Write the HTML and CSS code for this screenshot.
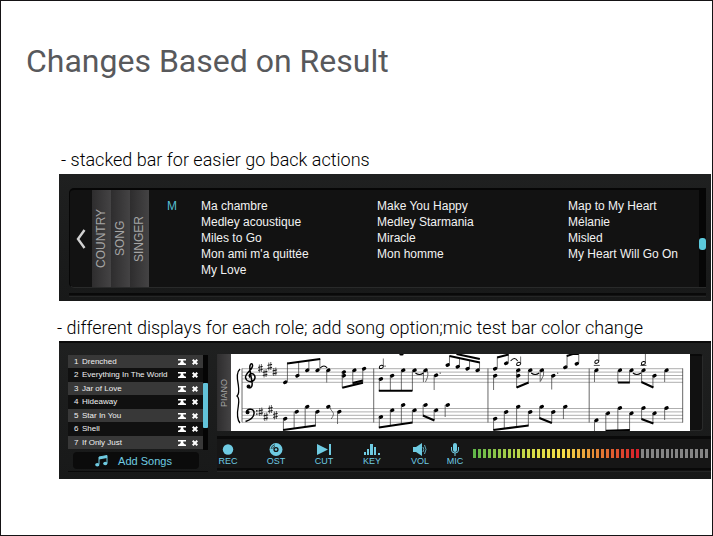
FILE: index.html
```html
<!DOCTYPE html>
<html lang="en">
<head>
<meta charset="utf-8">
<title>Changes Based on Result</title>
<link rel="stylesheet" href="styles.css">
</head>
<body>
<main class="slide">
  <h1>Changes Based on Result</h1>

  <section class="change">
    <h2>- stacked bar for easier go back actions</h2>
    <div class="panel browser">
      <div class="browser-well">
        <button class="back" type="button" aria-label="Back"><svg width="10" height="22" viewBox="0 0 10 22"><path d="M8.500 2L2 11l6.500 9" fill="none" stroke="#d2d2d2" stroke-width="2.400"/></svg></button>
        <nav class="stack">
          <button type="button">COUNTRY</button>
          <button type="button">SONG</button>
          <button type="button">SINGER</button>
        </nav>
        <div class="titles">
          <strong>M</strong>
          <ul><li>Ma chambre</li><li>Medley acoustique</li><li>Miles to Go</li><li>Mon ami m'a quittée</li><li>My Love</li></ul>
          <ul><li>Make You Happy</li><li>Medley Starmania</li><li>Miracle</li><li>Mon homme</li></ul>
          <ul><li>Map to My Heart</li><li>Mélanie</li><li>Misled</li><li>My Heart Will Go On</li></ul>
        </div>
        <div class="scroll"><i></i></div>
      </div>
      <div class="groove"></div>
    </div>
  </section>

  <section class="change second">
    <h2>- different displays for each role; add song option;mic test bar color change</h2>
    <div class="panel player">
      <svg class="defs" width="0" height="0">
        <symbol id="top" viewBox="0 0 8 6"><path d="M0 0h8v1.500H5.300V3L7 4.500h1V6H0V4.500h1L2.700 3V1.500H0z"/></symbol>
        <symbol id="del" viewBox="0 0 6 6"><path d="M.7 .7l4.600 4.600M5.300 .7L.7 5.300" stroke="#fff" stroke-width="2"/></symbol>
      </svg>
      <div class="queue">
        <div class="queue-list">
          <ol>
            <li><b>1</b><span>Drenched</span><button type="button" aria-label="Move to top"><svg width="8" height="6"><use href="#top"/></svg></button><button type="button" aria-label="Remove"><svg width="6" height="6"><use href="#del"/></svg></button></li>
            <li><b>2</b><span>Everything In The World</span><button type="button" aria-label="Move to top"><svg width="8" height="6"><use href="#top"/></svg></button><button type="button" aria-label="Remove"><svg width="6" height="6"><use href="#del"/></svg></button></li>
            <li><b>3</b><span>Jar of Love</span><button type="button" aria-label="Move to top"><svg width="8" height="6"><use href="#top"/></svg></button><button type="button" aria-label="Remove"><svg width="6" height="6"><use href="#del"/></svg></button></li>
            <li><b>4</b><span>Hideaway</span><button type="button" aria-label="Move to top"><svg width="8" height="6"><use href="#top"/></svg></button><button type="button" aria-label="Remove"><svg width="6" height="6"><use href="#del"/></svg></button></li>
            <li><b>5</b><span>Star In You</span><button type="button" aria-label="Move to top"><svg width="8" height="6"><use href="#top"/></svg></button><button type="button" aria-label="Remove"><svg width="6" height="6"><use href="#del"/></svg></button></li>
            <li><b>6</b><span>Shell</span><button type="button" aria-label="Move to top"><svg width="8" height="6"><use href="#top"/></svg></button><button type="button" aria-label="Remove"><svg width="6" height="6"><use href="#del"/></svg></button></li>
            <li><b>7</b><span>If Only Just</span><button type="button" aria-label="Move to top"><svg width="8" height="6"><use href="#top"/></svg></button><button type="button" aria-label="Remove"><svg width="6" height="6"><use href="#del"/></svg></button></li>
          </ol>
          <div class="queue-scroll"><i></i></div>
        </div>
        <button class="add" type="button"><svg width="13" height="12" viewBox="0 0 13 12"><path d="M4 9V2l8-1.500V8" fill="none" stroke="#6fcbe2"/><path d="M4 2l8-1.500V3L4 4.500z" fill="#6fcbe2"/><ellipse cx="2.300" cy="9.800" rx="2.100" ry="1.700" fill="#6fcbe2"/><ellipse cx="10.300" cy="8.500" rx="2.100" ry="1.700" fill="#6fcbe2"/></svg>Add Songs</button>
      </div>

      <div class="stage">
        <div class="score">
          <button class="part" type="button">PIANO</button>
          <svg class="sheet" viewBox="0 0 458 77" preserveAspectRatio="none" role="img" aria-label="Piano score">
            <g fill="none" stroke="#000">
              <path stroke="#777" stroke-width=".6" d="M11 14.700H451M11 18.100H451M11 21.500H451M11 24.900H451M11 28.300H451M11 54.500H451M11 57.900H451M11 61.300H451M11 64.700H451M11 68.300H451"/>
              <path stroke="#444" stroke-width=".8" d="M11 14.500v54M142.400 14.500v54M256.400 14.500v54M357.400 14.500v54M450.700 14.500v54"/>
              <path stroke-width="1.300" d="M9 15C5.500 18 6 25 7.300 31 8 36 8.500 40 6 42c2.500 2 2 6 1.300 10C6 59 5.500 65 9 69"/>
              <!-- treble clef -->
              <path stroke-width="1.500" d="M19 23.500c-1.500-1.700-.5-4 1.500-4 3 0 4.500 4 2.500 6.500-2.500 3-8 1.500-8.500-2.500C14 19 21 16.500 21.500 12c.2-3-1.700-3-2.500-.5-1 3.500 1 10 2 16.500.5 4-.5 6-2.800 6"/>
              <circle cx="17.500" cy="32.500" r="1.500" fill="#000"/>
              <!-- bass clef -->
              <path stroke-width="1.500" d="M15.500 58c.5-4 8-4 7.500 1.500-.3 4-4 6.500-8.500 8"/>
              <circle cx="16.500" cy="58.300" r="1.500" fill="#000"/><path stroke-width="1.600" stroke-linecap="round" d="M25.800 56.800v.1M25.800 60v.1"/>
              <!-- key signatures -->
              <path stroke-width=".6" d="M28.300 10.500v8M30.300 10v8M33 15.500v8M35 15v8M37.700 8.500v8M39.700 8v8M42.700 14v8M44.700 13.500v8M28.700 54v8M30.700 53.500v8M33.700 59v8M35.700 58.500v8M38.300 51.500v8M40.300 51v8M43.300 57.500v8M45.300 57v8"/>
              <path stroke-width=".9" d="M27 13.400l4.600-1M27 16.400l4.600-1M31.700 18.400l4.600-1M31.700 21.400l4.600-1M36.400 11.400l4.600-1M36.400 14.400l4.600-1M41.400 16.900l4.600-1M41.400 19.900l4.600-1M27.400 56.900l4.600-1M27.400 59.900l4.600-1M32.400 61.900l4.600-1M32.400 64.900l4.600-1M37 54.400l4.600-1M37 57.400l4.600-1M42 60.400l4.600-1M42 63.400l4.600-1"/>
              <!-- note heads -->
              <path stroke-width="3.200" stroke-linecap="round" d="M53.500 28.600l1.200-.6M65.700 22l1.200-.6M75.500 16.600l1.200-.6M85.700 16.600l1.200-.6M96.500 16.600l1.200-.6M112 18.400l1.200-.6M112 22l1.200-.6M122.500 16.600l1.200-.6M132.200 15l1.200-.6M53.500 65l1.200-.6M65 58l1.200-.6M75.500 53l1.200-.6M85.700 58l1.200-.6M96.500 53l1.200-.6M107.500 58l1.200-.6"/>
              <path stroke-width="3.200" stroke-linecap="round" d="M149 25.300l1.200-.6M160.200 22l1.200-.6M171.200 16.600l1.200-.6M182.500 16.600l1.200-.6M193.500 16.600l1.200-.6M204 21.600l1.200-.6M215.700 11.300l1.200-.6M225.700 13l1.200-.6M235.500 15l1.200-.6M245.500 16.600l1.200-.6M169.500 0h1.200M149 63.300l1.200-.6M160.200 56.600l1.200-.6M171.200 51.300l1.200-.6M182.500 56.600l1.200-.6M193.500 51.300l1.200-.6M204 56.600l1.200-.6M215.700 51.300l1.200-.6"/>
              <path stroke-width="3.200" stroke-linecap="round" d="M263 15l1.200-.6M274 9.600l1.200-.6M263 22l1.200-.6M286 16.600l1.200-.6M286 22l1.200-.6M298 16.600l1.200-.6M309.500 16.600l1.200-.6M321 22l1.200-.6M333 13.600l1.200-.6M344.500 10l1.200-.6M263 65l1.200-.6M274 58.300l1.200-.6M286 53l1.200-.6M298 58.300l1.200-.6M309.500 53l1.200-.6M321 58.300l1.200-.6M333 53l1.200-.6"/>
              <path stroke-width="3.200" stroke-linecap="round" d="M364 16.600l1.200-.6M387.500 16.600l1.200-.6M399 16.600l1.200-.6M411 16.600l1.200-.6M422 22l1.200-.6M434 16.600l1.200-.6M364 66.600l1.200-.6M375.500 59.600l1.200-.6M387.500 54.300l1.200-.6M399 59.600l1.200-.6M411 54.300l1.200-.6M422 59.600l1.200-.6M434 54.300l1.200-.6"/>
              <path d="M148 13.500c0-2.500 4-3 4-1s-4 3-4 1M285 10.500c0-2.500 4-3 4-1s-4 3-4 1M363 8.300c0-2.500 4-3 4-1s-4 3-4 1M409.500 9.800c0-2.500 4-3 4-1s-4 3-4 1"/>
              <path stroke-width=".7" d="M362 11.400h6M408.500 11.400h6"/>
              <!-- stems -->
              <path stroke="#333" stroke-width=".7" d="M56.300 28V8.700M67.500 21V7M77.700 16V6M88.700 16V4.500M95.500 17v11.500M111 18v15.500M121.500 17v13M131.500 15v13M52.300 65v11.700M63 58v17M74 53v20M84.300 58v13.700M98.500 53q1 3 3 5t-1.500 7M106.300 58v12M152 12V4.500M148 25v12M159 22v15M170 17v20M181 17v20M195.800 17q2 4-1.800 11M192 17v11M202.700 22v14M218 11V1.500M228 12V4M238 14V6M248 16V8M148 63v10.500M159 56v16M170 51v19M181 56v12.500M191.700 51v10.500M202.700 56v10M213.700 51v12"/>
              <path stroke="#333" stroke-width=".7" d="M265.700 14V3.500M276.700 9V0M289 10V2.500M262 22v14M285 17v17M296.700 17v11M312 17q1 4-3 10M308.500 17v11M320 22v13.500M335.300 13V1.500M347 9V0M262 65v11M272.700 58v16.500M285 53v20M296.700 58v13.500M308 53v11M320 58v10.500M331.700 53v12M367 7V0M413.500 9V0M362.700 17v11M386 17v11M397.700 17v11M409.700 17v11M421 22v11.500M432.700 17v11M362.700 66v11M374 59v18M386 54v23M397.700 59v17M409.700 54v11M421 59v10M432.700 54v12"/>
              <!-- beams -->
              <path stroke-width="2" d="M56 9.500l33-4.500M111 33.700l20.700-5M121.500 29l10-2.500M52 76l32.500-4.500M147.500 36.700H181M218 2l30.300 6.500M225 0l23.300 5M147.500 73.500l33.700-5M191.500 61.500l11.500 5M265.500 3.500l11.500-3M285 33.500l12-5M335 2l6-2h6M261.700 76l35.300-4.500M307.700 64l12.500 5M386 28.500h12M409.500 28l12 5.500M374 76.700l24-.7M409.500 65l12 4.500"/>
              <!-- ties and dots -->
              <path d="M89 14q4-4 7 0M184 19q4 3 8 0M279 7q4-5 7 0M299.500 19q4 3 8 0M401 19q4 3 8 0"/>
              <path stroke-width="1.200" stroke-linecap="round" d="M153.700 12v.1M208.700 19v.1M326 19v.1"/>
            </g>
          </svg>
          <div class="score-edge"></div>
        </div>
        <div class="tools">
          <button type="button"><svg width="16" height="13" viewBox="0 0 16 13"><circle cx="8" cy="6.500" r="5.200"/></svg>REC</button>
          <button type="button"><svg width="16" height="13" viewBox="0 0 16 13"><circle cx="8" cy="6.500" r="6.500"/><circle cx="8" cy="6.500" r="2.600" fill="#151515"/><circle cx="8" cy="6.500" r="1.200"/><path d="M3 6Q3.500 2.500 7 1.700M4.700 6Q5 4 7 3.300" fill="none" stroke="#151515" stroke-width=".7"/></svg>OST</button>
          <button type="button"><svg width="16" height="13" viewBox="0 0 16 13"><path d="M1 1l11 5.500L1 12zM13 1h2v11h-2z"/></svg>CUT</button>
          <button type="button"><svg width="16" height="13" viewBox="0 0 16 13"><path d="M0 9h2v3H0zM3 6h2v6H3zM6 1h3v11H6zM10 4h2v8h-2zM14 10h2v2h-2z"/></svg>KEY</button>
          <button type="button"><svg width="16" height="13" viewBox="0 0 16 13"><path d="M1 4h3l6-4v13L4 9H1z"/><path d="M11 4q1.500 2.500 0 5M12.500 2q3 4.500 0 9" fill="none" stroke="#6fcbe2" stroke-width=".8"/></svg>VOL</button>
          <button class="mic" type="button"><svg width="16" height="13" viewBox="0 0 16 13"><rect x="6" width="4" height="9" rx="2"/><path d="M4.500 4v3q0 3 3.500 3t3.500-3V4M8 10v3" fill="none" stroke="#6fcbe2"/></svg>MIC</button>
          <div class="level" id="level" role="meter" aria-label="Microphone level" aria-valuemin="0" aria-valuemax="48" aria-valuenow="34"></div>
        </div>
        <div class="groove"></div>
      </div>
    </div>
  </section>
</main>
<script src="level.js"></script>
</body>
</html>
```
FILE: level.js
```js
// Segment colours run green, yellow, orange, red; unlit segments are grey.
var level = document.getElementById('level');
var stops = [[98, 183, 73], [216, 222, 72], [246, 222, 72], [228, 130, 52], [216, 32, 42]];
var at = [0, 12, 18, 25, 33];
for (var i = 0; i < 48; i++) {
  var bar = document.createElement('i');
  if (i < 34) {
    var k = 0;
    while (k < 3 && i > at[k + 1]) k++;
    var t = (i - at[k]) / (at[k + 1] - at[k]);
    bar.style.background = 'rgb(' + stops[k].map(function (c, n) {
      return Math.round(c + (stops[k + 1][n] - c) * t);
    }).join(',') + ')';
  }
  level.appendChild(bar);
}
```
FILE: styles.css
```css
* { box-sizing: border-box; }
body { margin: 0; background: #fff; font-family: "Liberation Sans", Arial, sans-serif; }
button { margin: 0; padding: 0; border: 0; background: none; font: inherit; color: inherit; }
ul, ol { margin: 0; padding: 0; list-style: none; }
svg { display: block; }

.slide { min-height: 100vh; border: 1px solid #151315; padding-top: 40px; }
h1 { margin: 0 0 67px 25px; font: 400 32px/40px Roboto, sans-serif; color: #58595c; }
h2 { margin: 0; padding: 0 0 2px 2px; font: 300 18px/24px Roboto, sans-serif; color: #000; white-space: nowrap; }
.change { margin: 0 1px 0 58px; }
.second { margin-top: 15px; }
.second h2 { margin-left: -4px; padding-bottom: 1px; }

.panel { background: linear-gradient(#1f2020, #181919); }
.groove { height: 4px; border-top: 2px solid #090909; border-bottom: 1px solid #252626; background: #121212; }

.browser { padding: 14px 5px 4px 10px; }
.browser-well { display: flex; height: 100px; background: #121212; border-radius: 5px 0 0 5px; border-top: 2px solid #060606; border-left: 1px solid #060606; border-bottom: 1px solid #292a2a; }
.browser .groove { margin-top: 5px; }
.back { width: 22px; display: grid; place-items: center; }
.stack { display: flex; }
.stack button, .part { writing-mode: vertical-rl; transform: rotate(180deg); color: #a5a5a5; background: linear-gradient(270deg, #2e2d2e, #444344); text-align: center; }
.stack button { width: 19px; font-size: 12px; line-height: 19px; }
.titles { flex: 1; display: grid; grid-template-columns: 34px 176fr 191fr 131fr; padding: 8px 0 0 18px; font-size: 12px; line-height: 16px; color: #f2f2f2; white-space: nowrap; }
.titles strong { font-weight: 400; color: #55bfd0; }
.scroll { width: 7px; background: #060606; padding-top: 48px; }
.scroll i { display: block; height: 12px; border-radius: 3px; background: #5ccadd; }

.player { display: flex; padding: 11px 0 7px 9px; gap: 9px; border-top: 2px solid #0b0b0b; }
.defs { position: absolute; }
.queue { width: 140px; flex: none; padding-top: 1px; border-bottom: 1px solid #0a0a0a; }
.queue-list { display: flex; height: 95px; }
.queue ol { flex: 1; display: flex; flex-direction: column; }
.queue li { display: flex; align-items: center; height: 14px; padding: 0 5px 0 6px; font-size: 8px; line-height: 12px; color: #f0f0f0; background: #101010; white-space: nowrap; }
.queue li:nth-child(odd) { height: 13px; background: #383838; }
.queue li b { width: 8px; font-weight: 400; }
.queue li span { flex: 1; }
.queue li button { margin-left: 6px; fill: #fff; }
.queue-scroll { width: 5px; background: #050505; padding-top: 28px; }
.queue-scroll i { display: block; height: 45px; border-radius: 1px; background: #62c3da; }
.add { display: flex; align-items: center; justify-content: center; gap: 10px; width: 126px; height: 17px; margin: 2px 0 0 5px; padding-right: 5px; border-radius: 4px; background: #0b0b0b; color: #6fcbe2; font-size: 11px; }

.stage { flex: 1; min-width: 0; }
.score { display: flex; height: 77px; margin-bottom: 5px; }
.part { width: 14px; flex: none; font-size: 9px; line-height: 14px; }
.sheet { flex: 1; min-width: 0; height: 77px; background: #fff; }
.score-edge { width: 13px; margin-right: 8px; border: 1px solid #292a2a; border-left: 0; border-top: 2px solid #090909; background: #111; border-radius: 0 3px 3px 0; }
.tools { display: flex; gap: 26px; height: 32px; padding-top: 4px; border-top: 3px solid #0a0a0a; background: #161616; }
.tools button { display: flex; flex-direction: column; align-items: center; width: 22px; flex: none; font-size: 9px; line-height: 11px; color: #6fcbe2; fill: #6fcbe2; }
.tools .mic { margin-left: -13px; }
.level { flex: 1; display: flex; gap: 2px; height: 9px; margin: 6px 3px 0 -19px; }
.level i { flex: 1; background: #858585; }
```
